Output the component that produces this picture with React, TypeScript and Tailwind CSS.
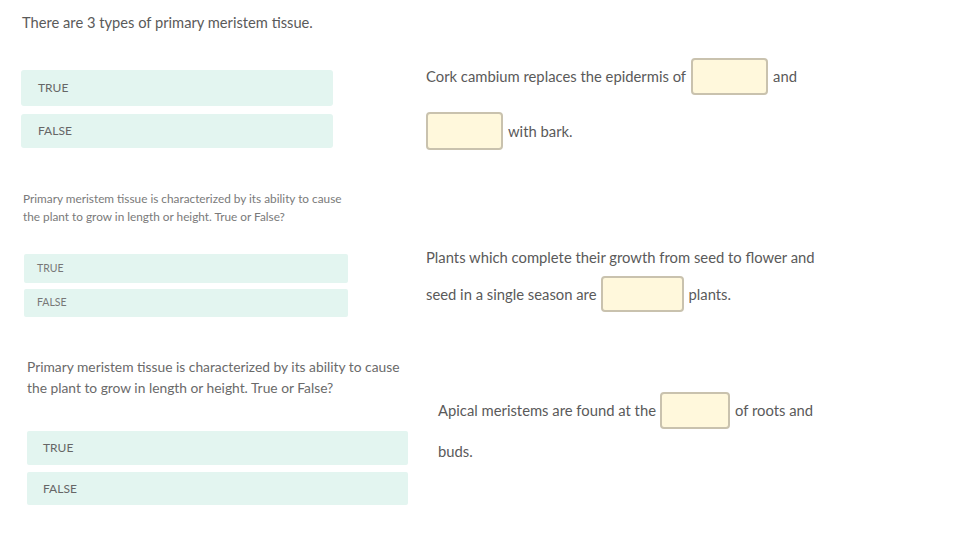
import React from "react";

const font = { fontFamily: "Lato, 'Open Sans', sans-serif" };

function Blank({ w, h }: { w: string; h: string }) {
  return (
    <span
      className={`inline-block shrink-0 rounded-[4px] border-2 border-[#c9c2ae] bg-[#fff8dc] ${w} ${h}`}
    />
  );
}

export default function App() {
  return (
    <div className="flex h-[540px] w-[960px] bg-white text-[#5a5a5a]" style={font}>
      {/* Left column */}
      <div className="flex w-[420px] flex-col">
        {/* Section A */}
        <div className="pl-[21px] pt-[12px]">
          <p className="h-[20px] text-[14.7px] leading-[20px] pl-px">There are 3 types of primary meristem tissue.</p>
          <div className="mt-[38px] flex h-[36px] w-[312px] items-center rounded-[3px] bg-[#e3f5f0] pl-[17px] text-[12px] text-[#666]">TRUE</div>
          <div className="mt-[8px] flex h-[34px] w-[312px] items-center rounded-[3px] bg-[#e3f5f0] pl-[17px] text-[12px] text-[#666]">FALSE</div>
        </div>
        {/* Section B */}
        <div className="pl-[23px] pt-[42px]">
          <p className="w-[330px] text-[11.8px] leading-[18px] text-[#7a7a7a]">
            Primary meristem tissue is characterized by its ability to cause the plant to grow in length or height. True or False?
          </p>
          <div className="ml-px mt-[28px] flex h-[29px] w-[324px] items-center rounded-[2px] bg-[#e3f5f0] pl-[13px] text-[10.5px] text-[#777]">TRUE</div>
          <div className="ml-px mt-[6px] flex h-[28px] w-[324px] items-center rounded-[2px] bg-[#e3f5f0] pl-[13px] text-[10.5px] text-[#777]">FALSE</div>
        </div>
        {/* Section C */}
        <div className="pl-[27px] pt-[39px]">
          <p className="w-[385px] text-[13.8px] leading-[21px] text-[#6a6a6a]">
            Primary meristem tissue is characterized by its ability to cause the plant to grow in length or height. True or False?
          </p>
          <div className="mt-[33px] flex h-[34px] w-[381px] items-center rounded-[2px] bg-[#e3f5f0] pl-[16px] text-[12px] text-[#666]">TRUE</div>
          <div className="mt-[7px] flex h-[33px] w-[381px] items-center rounded-[2px] bg-[#e3f5f0] pl-[16px] text-[12px] text-[#666]">FALSE</div>
        </div>
      </div>

      {/* Right column */}
      <div className="flex flex-1 flex-col pl-[6px] text-[14.8px]">
        {/* R1 */}
        <div className="pt-[58px]">
          <div className="flex h-[37px] items-center gap-[5px]">
            <span>Cork cambium replaces the epidermis of</span>
            <Blank w="w-[77px]" h="h-[37px]" />
            <span>and</span>
          </div>
          <div className="mt-[17px] flex h-[38px] items-center gap-[5px]">
            <Blank w="w-[77px]" h="h-[38px]" />
            <span>with bark.</span>
          </div>
        </div>
        {/* R2 */}
        <div className="pt-[97px]">
          <div className="flex h-[20px] items-center">
            <span>Plants which complete their growth from seed to flower and</span>
          </div>
          <div className="mt-[9px] flex h-[36px] items-center gap-[4px]">
            <span>seed in a single season are</span>
            <Blank w="w-[83px]" h="h-[36px]" />
            <span className="ml-px">plants.</span>
          </div>
        </div>
        {/* R3 */}
        <div className="pl-[12px] pt-[80px]">
          <div className="flex h-[37px] items-center gap-[4px]">
            <span>Apical meristems are found at the</span>
            <Blank w="w-[70px]" h="h-[37px]" />
            <span className="ml-px">of roots and</span>
          </div>
          <div className="mt-[12px] flex h-[20px] items-center">
            <span>buds.</span>
          </div>
        </div>
      </div>
    </div>
  );
}
